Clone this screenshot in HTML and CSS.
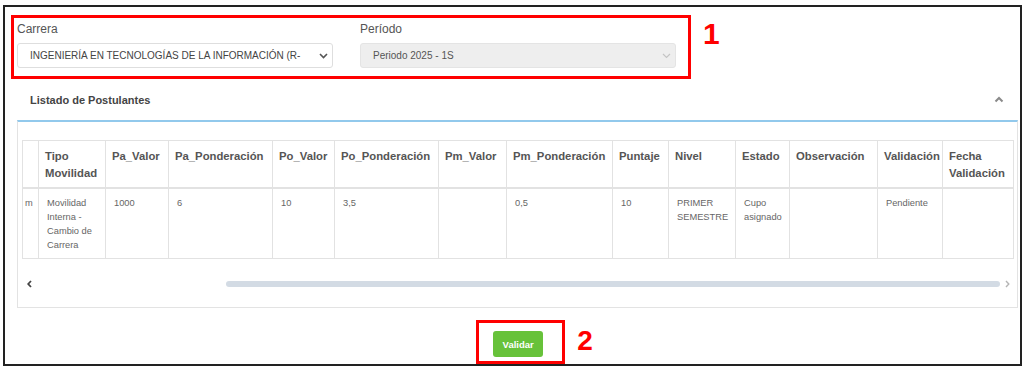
FILE: index.html
```html
<!DOCTYPE html>
<html lang="es">
<head>
  <meta charset="UTF-8">
  <meta name="viewport" content="width=device-width, initial-scale=1.0">
  <title>Listado de Postulantes</title>
  <link rel="stylesheet" href="styles.css">
</head>
<body>
  <div class="frame">
    <div class="filters-row">
      <div class="mark-box filters">
        <div class="field">
          <label class="field-label">Carrera</label>
          <div class="select">
            <span class="select-text">INGENIERÍA EN TECNOLOGÍAS DE LA INFORMACIÓN (R-</span>
            <svg class="chev" width="9" height="6" viewBox="0 0 9 6"><polyline points="1,1 4.5,4.5 8,1" fill="none" stroke="#555" stroke-width="1.6"/></svg>
          </div>
        </div>
        <div class="field">
          <label class="field-label">Período</label>
          <div class="select disabled">
            <span class="select-text">Periodo 2025 - 1S</span>
            <svg class="chev" width="9" height="6" viewBox="0 0 9 6"><polyline points="1,1 4.5,4.5 8,1" fill="none" stroke="#c4c4c4" stroke-width="1.2"/></svg>
          </div>
        </div>
      </div>
      <span class="mark-num">1</span>
    </div>

    <div class="panel">
      <div class="panel-head">
        <h3>Listado de Postulantes</h3>
        <svg width="10" height="7" viewBox="0 0 10 7"><polyline points="1.5,5.5 5,2 8.5,5.5" fill="none" stroke="#8a8a8a" stroke-width="2"/></svg>
      </div>
      <div class="panel-body">
        <table class="grid">
          <colgroup>
            <col style="width:16px"><col style="width:67px"><col style="width:63px"><col style="width:104px">
            <col style="width:62px"><col style="width:104px"><col style="width:68px"><col style="width:106px">
            <col style="width:56px"><col style="width:67px"><col style="width:54px"><col style="width:88px">
            <col style="width:65px"><col style="width:71px">
          </colgroup>
          <thead>
            <tr>
              <th class="cut"></th>
              <th>Tipo<br>Movilidad</th>
              <th>Pa_Valor</th>
              <th>Pa_Ponderación</th>
              <th>Po_Valor</th>
              <th>Po_Ponderación</th>
              <th>Pm_Valor</th>
              <th>Pm_Ponderación</th>
              <th>Puntaje</th>
              <th>Nivel</th>
              <th>Estado</th>
              <th>Observación</th>
              <th>Validación</th>
              <th>Fecha<br>Validación</th>
            </tr>
          </thead>
          <tbody>
            <tr>
              <td class="cut">m</td>
              <td>Movilidad<br>Interna -<br>Cambio de<br>Carrera</td>
              <td>1000</td>
              <td>6</td>
              <td>10</td>
              <td>3,5</td>
              <td></td>
              <td>0,5</td>
              <td>10</td>
              <td>PRIMER<br>SEMESTRE</td>
              <td>Cupo<br>asignado</td>
              <td></td>
              <td>Pendiente</td>
              <td></td>
            </tr>
          </tbody>
        </table>
        <div class="hscroll">
          <svg width="5" height="8" viewBox="0 0 5 8"><polyline points="4,1 1.2,4 4,7" fill="none" stroke="#444" stroke-width="1.8"/></svg>
          <div class="track"><div class="thumb"></div></div>
          <svg width="5" height="8" viewBox="0 0 5 8"><polyline points="1,1 3.8,4 1,7" fill="none" stroke="#b5b5b5" stroke-width="1.4"/></svg>
        </div>
      </div>
    </div>

    <div class="actions">
      <div class="mark-box action-box">
        <button class="btn-validar">Validar</button>
      </div>
      <span class="mark-num num-2">2</span>
    </div>
  </div>
</body>
</html>
```

FILE: styles.css
```css
* {
  margin: 0;
  padding: 0;
  box-sizing: border-box;
}

body {
  font-family: "Liberation Sans", Arial, sans-serif;
  background-color: #fff;
}

.frame {
  margin: 5px 0 0 3px;
  width: 1019px;
  height: 361px;
  border: 2px solid #222;
  background-color: #fff;
}

/* marcas rojas */
.mark-box {
  border: 3px solid #f00;
}

.mark-num {
  color: #f00;
  font-weight: bold;
  line-height: 1;
}

.filters-row {
  display: flex;
  align-items: flex-start;
  padding: 8px 0 0 6px;
}

.filters {
  width: 680px;
  height: 64px;
  padding: 4px 12px 0 3px;
  display: flex;
  gap: 27px;
}

.filters-row .mark-num {
  font-size: 30px;
  margin: 4px 0 0 12px;
}

.field {
  width: 316px;
}

.field-label {
  display: block;
  font-size: 12px;
  line-height: 14px;
  color: #555;
  margin-bottom: 7px;
}

.select {
  height: 25px;
  border: 1px solid #dedede;
  border-radius: 3px;
  padding: 0 4px 0 12px;
  display: flex;
  align-items: center;
  background-color: #fff;
}

.select.disabled {
  background-color: #eee;
  border-color: #e4e4e4;
}

.select-text {
  flex: 1;
  font-size: 10px;
  color: #444;
  white-space: nowrap;
  margin-right: 8px;
}

.select.disabled .select-text {
  color: #555;
}

.chev {
  flex-shrink: 0;
}

/* panel */
.panel {
  margin: 0 2px 0 12px;
}

.panel-head {
  height: 41px;
  display: flex;
  align-items: center;
  justify-content: space-between;
  padding: 0 14px 0 13px;
}

.panel-head h3 {
  font-size: 11px;
  font-weight: bold;
  color: #444;
}

.panel-body {
  height: 188px;
  border: 1px solid #e3e3e3;
  border-top: 2px solid #92c9ec;
  padding: 18px 4px 0 4px;
}

.grid {
  border-collapse: collapse;
  table-layout: fixed;
  width: 991px;
}

.grid th,
.grid td {
  border: 1px solid #e2e2e2;
  text-align: left;
  vertical-align: top;
  overflow: hidden;
  white-space: nowrap;
}

.grid th {
  font-size: 11.3px;
  font-weight: bold;
  color: #555;
  line-height: 17px;
  padding: 7px 2px 5px 6px;
  border-bottom-width: 2px;
}

.grid td {
  font-size: 9.3px;
  color: #666;
  line-height: 14px;
  padding: 7px 4px 6px 8px;
}

.grid .cut {
  padding-left: 2px;
  padding-right: 0;
}

.hscroll {
  display: flex;
  align-items: center;
  height: 12px;
  margin-top: 19px;
  padding: 0 3px 0 5px;
  width: 991px;
}

.track {
  flex: 1;
  display: flex;
  margin: 0 5px;
}

.thumb {
  margin-left: auto;
  width: 774px;
  height: 6px;
  border-radius: 3px;
  background-color: #d3dbe4;
}

/* acciones */
.actions {
  display: flex;
  justify-content: center;
  align-items: flex-start;
  margin-top: 12px;
  padding-left: 44px;
}

.action-box {
  padding: 8px 19px 4px 14px;
}

.btn-validar {
  display: block;
  width: 50px;
  height: 26px;
  border: none;
  border-radius: 3px;
  background-color: #67c23a;
  color: #fff;
  font-family: "Liberation Sans", Arial, sans-serif;
  font-size: 9.5px;
  font-weight: bold;
}

.num-2 {
  font-size: 28px;
  margin: 7px 0 0 12px;
}
```
